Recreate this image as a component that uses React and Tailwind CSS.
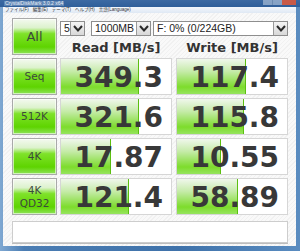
import React from "react";

const rows = [
  { label: ["Seq"], read: "349.3", readBar: 78, write: "117.4", writeBar: 69 },
  { label: ["512K"], read: "321.6", readBar: 78, write: "115.8", writeBar: 67 },
  { label: ["4K"], read: "17.87", readBar: 50, write: "10.55", writeBar: 44 },
  { label: ["4K", "QD32"], read: "121.4", readBar: 68, write: "58.89", writeBar: 61 },
];

const TestButton = ({ children, big }) => (
  <div className="w-[45px] h-[37px] border border-[#a9a9a9] bg-[linear-gradient(to_bottom,#f4f9f0_0%,#dcf2cc_25%,#7fe22a_42%,#5ed400_80%,#8fe35a_100%)] shadow-[inset_0_0_0_1px_rgba(255,255,255,0.6)] flex flex-col items-center justify-center text-[#3c4a3c] leading-[13px]">
    {big ? <span className="text-[13px]">{children}</span> : children}
  </div>
);

const ValueCell = ({ value, bar }) => (
  <div className="relative w-[112px] h-[37px] border border-[#d6d6d6] bg-white">
    <div
      className="absolute left-0 top-0 bottom-0 bg-[linear-gradient(to_bottom,#f0f7ec_0%,#c6ebaa_35%,#7ddc2c_80%,#96e45e_100%)] border-r border-[#5cbf10]"
      style={{ width: bar }}
    />
    <div className="relative h-full flex items-center justify-end pr-[8px] pt-[2px] text-[28px] font-bold text-[#383838] font-['DejaVu_Sans',sans-serif] leading-none">
      {value}
    </div>
  </div>
);

const Chevron = () => (
  <div className="w-[14px] h-full border-l border-[#9a9a9a] bg-[linear-gradient(to_bottom,#f4f4f4,#d8d8d8)] flex items-center justify-center">
    <svg width="10" height="7" viewBox="0 0 10 7">
      <polyline points="1,1 5,5.5 9,1" fill="none" stroke="#2a2a2a" strokeWidth="2" />
    </svg>
  </div>
);

const Select = ({ text, width }) => (
  <div className={`${width} h-[15px] border border-[#8e8e8e] bg-white flex items-stretch`}>
    <div className="flex-1 pl-[3px] flex items-center text-[10.5px] text-[#222] font-['Liberation_Sans',sans-serif] leading-none">
      {text}
    </div>
    <Chevron />
  </div>
);

export default function App() {
  return (
    <div className="w-[300px] h-[251px] flex flex-col overflow-hidden bg-[linear-gradient(to_right,#7fa8d2,#4b7db3_8%,#3f72aa_60%,#5a8cc0)]">
      {/* title bar */}
      <div className="h-[7px] flex items-center px-[4px] bg-[linear-gradient(to_bottom,#3d6aa3,#2f5f9a)]">
        <span className="text-[5px] leading-none text-[#e8eef6] font-['Liberation_Sans',sans-serif] bg-[#9db8d6]/40 px-[1px]">
          CrystalDiskMark 3.0.2 x64
        </span>
        <div className="ml-auto flex h-[5px] self-start">
          <div className="w-[10px] bg-[#a9bdd6]/70 border-r border-[#6d8bb0]" />
          <div className="w-[9px] bg-[#a9bdd6]/70" />
          <div className="w-[14px] bg-[#c85a48]" />
        </div>
      </div>

      <div className="flex-1 flex flex-col ml-[3px] mr-[4px] mb-[5px]">
        {/* menu bar */}
        <div className="h-[6px] flex items-center gap-[4px] pl-[2px] bg-[linear-gradient(to_bottom,#f4f7fc,#dfe8f4)] text-[4.5px] leading-none text-[#333] font-['Liberation_Sans','Noto_Sans_CJK_JP',sans-serif]">
          <span>ファイル(F)</span>
          <span>編集(E)</span>
          <span>テーマ(T)</span>
          <span>ヘルプ(H)</span>
          <span>言語(Language)</span>
        </div>

        {/* content */}
        <div className="flex-1 pt-[5px] pl-[9px] pr-[5px] bg-[repeating-linear-gradient(135deg,#f9f9f9_0px,#f9f9f9_2px,#f1f1f1_2px,#f1f1f1_3px)] font-['DejaVu_Sans',sans-serif]">
          <div className="flex h-[37px]">
            <TestButton big>All</TestButton>
            <div className="ml-[3px] flex-1 flex flex-col">
              <div className="flex mt-[3px]">
                <Select text="5" width="w-[25px]" />
                <div className="ml-[6px]">
                  <Select text="1000MB" width="w-[60px]" />
                </div>
                <div className="ml-[2px]">
                  <Select text="F: 0% (0/224GB)" width="w-[135px]" />
                </div>
              </div>
              <div className="flex mt-[4px] text-[13px] font-bold text-[#333] leading-[15px]">
                <div className="w-[112px] text-center">Read [MB/s]</div>
                <div className="w-[112px] ml-[4px] text-center">Write [MB/s]</div>
              </div>
            </div>
          </div>

          {rows.map((r, i) => (
            <div key={i} className="flex mt-[3px]">
              <TestButton>
                {r.label.map((l) => (
                  <span key={l} className="text-[10.5px]">{l}</span>
                ))}
              </TestButton>
              <div className="ml-[3px]">
                <ValueCell value={r.read} bar={r.readBar} />
              </div>
              <div className="ml-[4px]">
                <ValueCell value={r.write} bar={r.writeBar} />
              </div>
            </div>
          ))}

          <div className="mt-[6px] w-[276px] h-[22px] bg-white border border-[#cdcdcd] shadow-[0_1px_0_#bdbdbd]" />
        </div>
      </div>
    </div>
  );
}
